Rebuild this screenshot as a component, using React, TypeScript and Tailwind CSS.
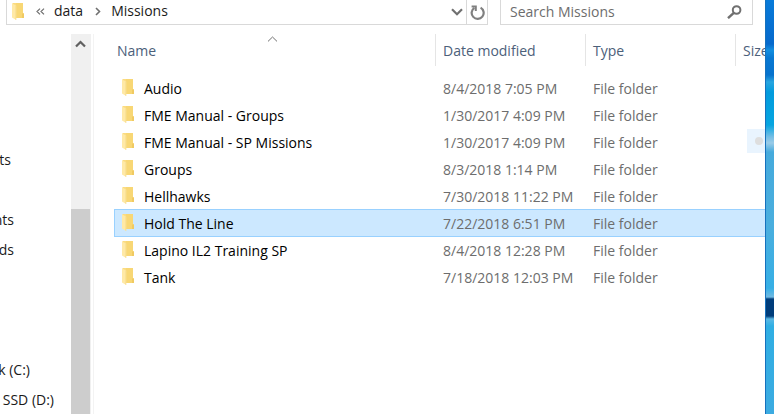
import React from "react";

interface FileEntry {
   name: string;
   modified: string;
   type: string;
}

interface NavEntry {
   label: string;
   width: string;
}

const files: FileEntry[] = [
   { name: "Audio", modified: "8/4/2018 7:05 PM", type: "File folder" },
   { name: "FME Manual - Groups", modified: "1/30/2017 4:09 PM", type: "File folder" },
   { name: "FME Manual - SP Missions", modified: "1/30/2017 4:09 PM", type: "File folder" },
   { name: "Groups", modified: "8/3/2018 1:14 PM", type: "File folder" },
   { name: "Hellhawks", modified: "7/30/2018 11:22 PM", type: "File folder" },
   { name: "Hold The Line", modified: "7/22/2018 6:51 PM", type: "File folder" },
   { name: "Lapino IL2 Training SP", modified: "8/4/2018 12:28 PM", type: "File folder" },
   { name: "Tank", modified: "7/18/2018 12:03 PM", type: "File folder" },
];

const selectedName = "Hold The Line";

// the pane is scrolled sideways, so only the ends of the labels are in view
const navEntries: NavEntry[] = [
   { label: "ts", width: "w-[11px]" },
   { label: "", width: "w-0" },
   { label: "nts", width: "w-3.5" },
   { label: "ds", width: "w-3.5" },
   { label: "", width: "w-0" },
   { label: "", width: "w-0" },
   { label: "", width: "w-0" },
   { label: "k (C:)", width: "w-[30px]" },
   { label: "SSD (D:)", width: "w-[54px]" },
];

const FolderIcon: React.FC = () => (
   <svg width="13" height="17" viewBox="0 0 13 17" className="shrink-0" aria-hidden="true">
      <path d="M0.5 0H11V10.5H12V15H2L0.5 13Z" fill="#fbdc82" />
      <path d="M4 0H11V10.5H12V15H4Z" fill="#f8d775" />
      <path d="M10 10.5H12V15H10Z" fill="#f0ca62" />
      <path d="M0 0.4L4.2 2.6V17L0 14.6Z" fill="#ffe9a6" />
      <path d="M3.4 2.2L4.2 2.6V17L3.4 16.5Z" fill="#f5dc8f" />
   </svg>
);

const AddressBar: React.FC = () => (
   <nav aria-label="Address" className="flex flex-1 border-x border-b border-[#d9d9d9]">
      <div className="flex flex-1 items-center pb-0.5 pl-[5px]">
         <FolderIcon />
         <button type="button" aria-label="Show parent folders" className="ml-[11px]">
            <svg width="9" height="7" viewBox="0 0 9 7" fill="none" stroke="#707070" strokeWidth="1.2">
               <path d="M4 0.6L1 3.5L4 6.4M8 0.6L5 3.5L8 6.4" />
            </svg>
         </button>
         <a href="#data" className="ml-[9px]">data</a>
         <svg width="6" height="9" viewBox="0 0 6 9" fill="none" stroke="#707070" strokeWidth="1.6" className="ml-3">
            <path d="M1 1L4.5 4.5L1 8" />
         </svg>
         <a href="#missions" className="ml-2.5">Missions</a>
      </div>
      <button type="button" aria-label="Previous locations" className="flex w-[19px] items-center justify-center">
         <svg width="12" height="8" viewBox="0 0 12 8" fill="none" stroke="#707070" strokeWidth="2.2">
            <path d="M1 1.2L6 6.2L11 1.2" />
         </svg>
      </button>
      <button
         type="button"
         aria-label="Refresh"
         className="flex w-[21px] items-center justify-center border-l border-[#d9d9d9]">
         <svg width="15" height="15" viewBox="0 0 15 15" fill="none" stroke="#808080" strokeWidth="2.2">
            <path d="M10.6 2.6A6 6 0 1 1 4.4 2.8" />
            <path d="M1.6 1.4H5.8V6" strokeWidth="2" />
         </svg>
      </button>
   </nav>
);

const SearchBox: React.FC = () => (
   <div className="flex w-[253px] items-center border-x border-b border-[#d9d9d9] pr-2.5 pl-[9px]">
      <input
         type="search"
         aria-label="Search Missions"
         placeholder="Search Missions"
         className="min-w-0 flex-1 outline-none placeholder:text-[#6d6d6d]"
      />
      <svg width="15" height="14" viewBox="0 0 15 14" fill="none" stroke="#707070" aria-hidden="true">
         <circle cx="9.6" cy="5" r="3.8" strokeWidth="2" />
         <path d="M6.8 7.8L1 13.2" strokeWidth="2.4" />
      </svg>
   </div>
);

const NavPane: React.FC = () => (
   <aside className="flex w-[94px] shrink-0 border-r border-[#f3f3f3]">
      <ul className="flex-1 pt-[111px]">
         {navEntries.map((entry, index) => (
            <li key={index} className={`flex h-[30px] items-center justify-end whitespace-nowrap ${entry.width}`}>
               {entry.label}
            </li>
         ))}
      </ul>
      <div className="mr-0.5 flex w-5 flex-col bg-[#f0f0f0]">
         <button type="button" aria-label="Scroll up" className="flex h-[175px] items-start justify-center pt-1.5 pr-0.5">
            <svg width="11" height="8" viewBox="0 0 11 8" fill="none" stroke="#606060" strokeWidth="2.2">
               <path d="M1 6.6L5.5 2L10 6.6" />
            </svg>
         </button>
         <div className="mr-px flex-1 bg-[#cdcdcd]" />
      </div>
   </aside>
);

const FileTable: React.FC = () => (
   <table className="w-full table-fixed border-separate border-spacing-0">
      <colgroup>
         <col className="w-[322px]" />
         <col className="w-[150px]" />
         <col className="w-[150px]" />
         <col />
      </colgroup>
      <thead className="text-left text-[#4c607a]">
         <tr>
            <th className="border-r border-[#e5e5e5] p-0 pl-[3px] font-normal">
               <div className="flex h-8 items-center pt-0.5">
                  <span className="w-[150px]">Name</span>
                  <svg width="11" height="6" viewBox="0 0 11 6" fill="none" stroke="#707070" className="self-start">
                     <path d="M1 5.4L5.5 1L10 5.4" />
                  </svg>
               </div>
            </th>
            <th className="border-r border-[#e5e5e5] p-0 pt-0.5 pl-[7px] font-normal">Date modified</th>
            <th className="border-r border-[#e5e5e5] p-0 pt-0.5 pl-[7px] font-normal">Type</th>
            <th className="overflow-hidden p-0 pt-0.5 pl-[7px] font-normal whitespace-nowrap">Size</th>
         </tr>
      </thead>
      <tbody className="text-[#6d6d6d]">
         <tr className="h-2" aria-hidden="true" />
         {files.map((file, index) => {
            const selected = file.name === selectedName;
            const afterSelected = index > 0 && files[index - 1].name === selectedName;
            const line = selected || afterSelected ? "border-t border-[#99d1ff]" : "border-t border-transparent";
            return (
               <tr
                  key={file.name}
                  aria-selected={selected}
                  className={`h-[27px] ${selected ? "bg-[#cce8ff]" : ""}`}>
                  <td className={`p-0 pt-0.5 ${line} ${selected ? "border-l pl-[7px]" : "pl-2"}`}>
                     <div className="flex items-start gap-[9px] whitespace-nowrap text-black">
                        <FolderIcon />
                        {file.name}
                     </div>
                  </td>
                  <td className={`p-0 pt-0.5 pl-[7px] whitespace-nowrap ${line}`}>{file.modified}</td>
                  <td className={`p-0 pt-0.5 pl-[7px] whitespace-nowrap ${line}`}>{file.type}</td>
                  <td className={line} />
               </tr>
            );
         })}
      </tbody>
   </table>
);

const App: React.FC = () => {
   return (
      <div className="flex min-h-screen bg-white font-['Open_Sans','Noto_Sans',sans-serif] text-sm leading-5 text-[#1a1a1a]">
         <div className="relative flex min-w-0 flex-1 flex-col overflow-hidden">
            <header className="flex h-[25px] gap-3 pr-3 pl-1.5">
               <AddressBar />
               <SearchBox />
            </header>
            <div className="flex flex-1 pt-[9px]">
               <NavPane />
               <main className="min-w-0 flex-1 pl-5">
                  <FileTable />
               </main>
            </div>
            <div className="absolute top-[129px] right-0 flex h-6 w-[18px] items-center justify-center bg-[#e9f4fe] pl-1.5">
               <span className="size-2 rounded-full bg-[#dedede]" />
            </div>
         </div>
         <div className="w-[9px] shrink-0 border-l border-[#1671bd] bg-[linear-gradient(to_bottom,#087bd9_0px,#0669cc_44px,#128fe0_50px,#0878d2_58px,#0672cd_75px,#28a5df_82px,#029bdd_92px,#06a5e0_125px,#75bee5_137px,#9acbe8_143px,#45aadc_152px,#4aaede_225px,#36afe5_288px,#70b9e2_297px,#003d7b_299px,#003d7b_316px,#5bb8e4_319px,#2faee3_326px,#3cabe1_414px)]" />
      </div>
   );
};

export default App;
